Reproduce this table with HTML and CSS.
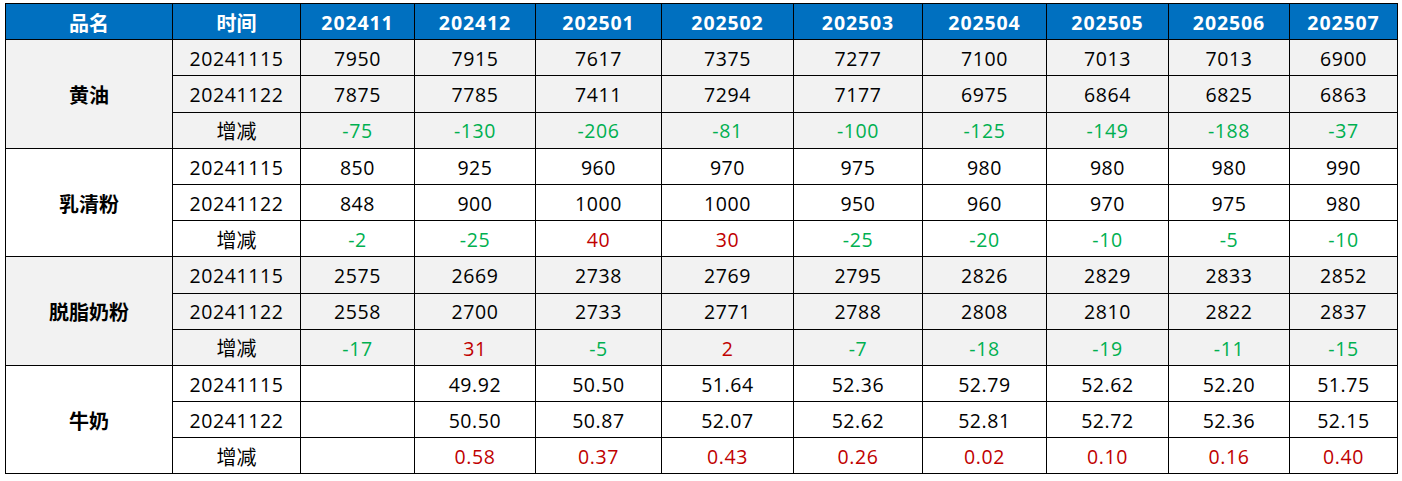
FILE: index.html
```html
<!DOCTYPE html>
<html lang="zh-CN">
<head>
<meta charset="utf-8">
<title>品名价格表</title>
<link rel="stylesheet" href="styles.css">
</head>
<body>
<div class="wrap">
<table class="price">
  <colgroup>
    <col style="width:167px"><col style="width:128px"><col style="width:114px"><col style="width:121px"><col style="width:126px"><col style="width:132px"><col style="width:129px"><col style="width:124px"><col style="width:122px"><col style="width:121px"><col style="width:108px">
  </colgroup>
  <thead>
    <tr><th class="cn">品名</th><th class="cn">时间</th><th>202411</th><th>202412</th><th>202501</th><th>202502</th><th>202503</th><th>202504</th><th>202505</th><th>202506</th><th>202507</th></tr>
  </thead>
  <tbody class="grey">
    <tr><td class="name" rowspan="3">黄油</td><td>20241115</td><td>7950</td><td>7915</td><td>7617</td><td>7375</td><td>7277</td><td>7100</td><td>7013</td><td>7013</td><td>6900</td></tr>
    <tr><td>20241122</td><td>7875</td><td>7785</td><td>7411</td><td>7294</td><td>7177</td><td>6975</td><td>6864</td><td>6825</td><td>6863</td></tr>
    <tr><td class="cn">增减</td><td class="dn">-75</td><td class="dn">-130</td><td class="dn">-206</td><td class="dn">-81</td><td class="dn">-100</td><td class="dn">-125</td><td class="dn">-149</td><td class="dn">-188</td><td class="dn">-37</td></tr>
  </tbody>
  <tbody>
    <tr><td class="name" rowspan="3">乳清粉</td><td>20241115</td><td>850</td><td>925</td><td>960</td><td>970</td><td>975</td><td>980</td><td>980</td><td>980</td><td>990</td></tr>
    <tr><td>20241122</td><td>848</td><td>900</td><td>1000</td><td>1000</td><td>950</td><td>960</td><td>970</td><td>975</td><td>980</td></tr>
    <tr><td class="cn">增减</td><td class="dn">-2</td><td class="dn">-25</td><td class="up">40</td><td class="up">30</td><td class="dn">-25</td><td class="dn">-20</td><td class="dn">-10</td><td class="dn">-5</td><td class="dn">-10</td></tr>
  </tbody>
  <tbody class="grey">
    <tr><td class="name" rowspan="3">脱脂奶粉</td><td>20241115</td><td>2575</td><td>2669</td><td>2738</td><td>2769</td><td>2795</td><td>2826</td><td>2829</td><td>2833</td><td>2852</td></tr>
    <tr><td>20241122</td><td>2558</td><td>2700</td><td>2733</td><td>2771</td><td>2788</td><td>2808</td><td>2810</td><td>2822</td><td>2837</td></tr>
    <tr><td class="cn">增减</td><td class="dn">-17</td><td class="up">31</td><td class="dn">-5</td><td class="up">2</td><td class="dn">-7</td><td class="dn">-18</td><td class="dn">-19</td><td class="dn">-11</td><td class="dn">-15</td></tr>
  </tbody>
  <tbody>
    <tr><td class="name" rowspan="3">牛奶</td><td>20241115</td><td></td><td>49.92</td><td>50.50</td><td>51.64</td><td>52.36</td><td>52.79</td><td>52.62</td><td>52.20</td><td>51.75</td></tr>
    <tr><td>20241122</td><td></td><td>50.50</td><td>50.87</td><td>52.07</td><td>52.62</td><td>52.81</td><td>52.72</td><td>52.36</td><td>52.15</td></tr>
    <tr><td class="cn">增减</td><td></td><td class="up">0.58</td><td class="up">0.37</td><td class="up">0.43</td><td class="up">0.26</td><td class="up">0.02</td><td class="up">0.10</td><td class="up">0.16</td><td class="up">0.40</td></tr>
  </tbody>
</table>
</div>
</body>
</html>
```

FILE: styles.css
```css
html, body {
  margin: 0;
  padding: 0;
  background: #ffffff;
}

.wrap {
  padding: 3px 0 0 5px;
}

.price {
  border-collapse: collapse;
  table-layout: fixed;
  width: 1393px;
  font-family: "Open Sans", "Noto Sans CJK SC", sans-serif;
  font-size: 19.5px;
  color: #000000;
}

.price th,
.price td {
  border: 1px solid #000000;
  padding: 2px 0 0 0;
  text-align: center;
  vertical-align: middle;
  height: 33.2px;
  letter-spacing: 0.6px;
  line-height: 1;
}

.price th {
  background: #0070c0;
  color: #ffffff;
  font-weight: 700;
  letter-spacing: 0.9px;
}

.price tbody.grey td {
  background: #f2f2f2;
}

.price .name {
  font-weight: 700;
  font-family: "Noto Sans CJK SC", sans-serif;
  font-size: 20px;
  letter-spacing: 0;
}

.price .cn {
  font-family: "Noto Sans CJK SC", sans-serif;
  font-size: 20px;
  letter-spacing: 0;
}

.price td.cn {
  font-weight: 400;
}

.price td.dn {
  color: #00b050;
}

.price td.up {
  color: #c00000;
}
```
